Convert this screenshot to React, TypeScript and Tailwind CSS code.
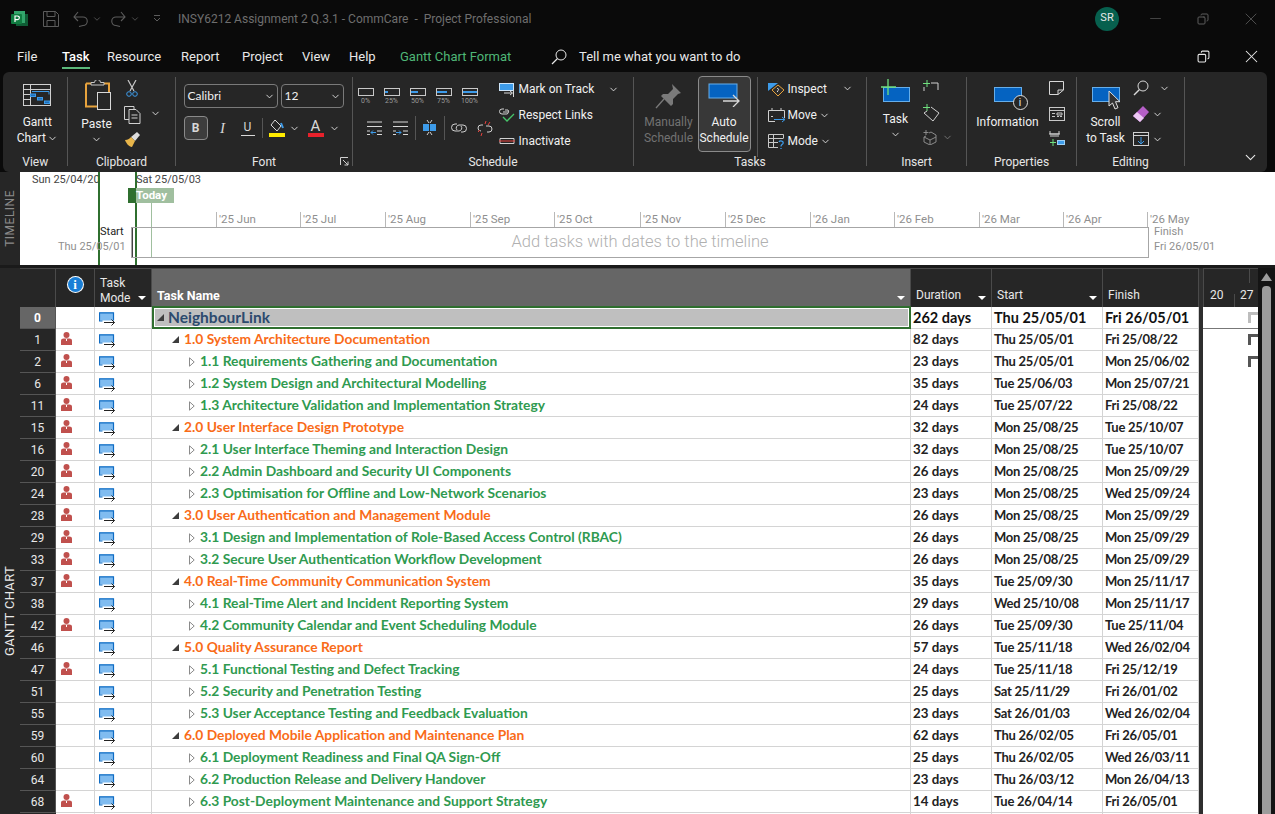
import React from "react";
import { ChevronDown, X, Minus, Copy } from "lucide-react";

const ui = "font-['Roboto',sans-serif]";
const cal = "font-['Lato',sans-serif]";

type Row = { id: number; name: string; dur: string; start: string; finish: string; lvl: 0 | 1 | 2; res: boolean };

const rows: Row[] = [
  { id: 0, name: "NeighbourLink", dur: "262 days", start: "Thu 25/05/01", finish: "Fri 26/05/01", lvl: 0, res: false },
  { id: 1, name: "1.0 System Architecture Documentation", dur: "82 days", start: "Thu 25/05/01", finish: "Fri 25/08/22", lvl: 1, res: true },
  { id: 2, name: "1.1 Requirements Gathering and Documentation", dur: "23 days", start: "Thu 25/05/01", finish: "Mon 25/06/02", lvl: 2, res: true },
  { id: 6, name: "1.2 System Design and Architectural Modelling", dur: "35 days", start: "Tue 25/06/03", finish: "Mon 25/07/21", lvl: 2, res: true },
  { id: 11, name: "1.3 Architecture Validation and Implementation Strategy", dur: "24 days", start: "Tue 25/07/22", finish: "Fri 25/08/22", lvl: 2, res: true },
  { id: 15, name: "2.0 User Interface Design Prototype", dur: "32 days", start: "Mon 25/08/25", finish: "Tue 25/10/07", lvl: 1, res: true },
  { id: 16, name: "2.1 User Interface Theming and Interaction Design", dur: "32 days", start: "Mon 25/08/25", finish: "Tue 25/10/07", lvl: 2, res: true },
  { id: 20, name: "2.2 Admin Dashboard and Security UI Components", dur: "26 days", start: "Mon 25/08/25", finish: "Mon 25/09/29", lvl: 2, res: true },
  { id: 24, name: "2.3 Optimisation for Offline and Low-Network Scenarios", dur: "23 days", start: "Mon 25/08/25", finish: "Wed 25/09/24", lvl: 2, res: true },
  { id: 28, name: "3.0 User Authentication and Management Module", dur: "26 days", start: "Mon 25/08/25", finish: "Mon 25/09/29", lvl: 1, res: true },
  { id: 29, name: "3.1 Design and Implementation of Role-Based Access Control (RBAC)", dur: "26 days", start: "Mon 25/08/25", finish: "Mon 25/09/29", lvl: 2, res: true },
  { id: 33, name: "3.2 Secure User Authentication Workflow Development", dur: "26 days", start: "Mon 25/08/25", finish: "Mon 25/09/29", lvl: 2, res: true },
  { id: 37, name: "4.0 Real-Time Community Communication System", dur: "35 days", start: "Tue 25/09/30", finish: "Mon 25/11/17", lvl: 1, res: true },
  { id: 38, name: "4.1 Real-Time Alert and Incident Reporting System", dur: "29 days", start: "Wed 25/10/08", finish: "Mon 25/11/17", lvl: 2, res: false },
  { id: 42, name: "4.2 Community Calendar and Event Scheduling Module", dur: "26 days", start: "Tue 25/09/30", finish: "Tue 25/11/04", lvl: 2, res: true },
  { id: 46, name: "5.0 Quality Assurance Report", dur: "57 days", start: "Tue 25/11/18", finish: "Wed 26/02/04", lvl: 1, res: false },
  { id: 47, name: "5.1 Functional Testing and Defect Tracking", dur: "24 days", start: "Tue 25/11/18", finish: "Fri 25/12/19", lvl: 2, res: true },
  { id: 51, name: "5.2 Security and Penetration Testing", dur: "25 days", start: "Sat 25/11/29", finish: "Fri 26/01/02", lvl: 2, res: false },
  { id: 55, name: "5.3 User Acceptance Testing and Feedback Evaluation", dur: "23 days", start: "Sat 26/01/03", finish: "Wed 26/02/04", lvl: 2, res: false },
  { id: 59, name: "6.0 Deployed Mobile Application and Maintenance Plan", dur: "62 days", start: "Thu 26/02/05", finish: "Fri 26/05/01", lvl: 1, res: false },
  { id: 60, name: "6.1 Deployment Readiness and Final QA Sign-Off", dur: "25 days", start: "Thu 26/02/05", finish: "Wed 26/03/11", lvl: 2, res: false },
  { id: 64, name: "6.2 Production Release and Delivery Handover", dur: "23 days", start: "Thu 26/03/12", finish: "Mon 26/04/13", lvl: 2, res: false },
  { id: 68, name: "6.3 Post-Deployment Maintenance and Support Strategy", dur: "14 days", start: "Tue 26/04/14", finish: "Fri 26/05/01", lvl: 2, res: true },
];

const months: [string, number][] = [
  ["'25 Jun", 216], ["'25 Jul", 300], ["'25 Aug", 385], ["'25 Sep", 470], ["'25 Oct", 554], ["'25 Nov", 640],
  ["'25 Dec", 725], ["'26 Jan", 810], ["'26 Feb", 894], ["'26 Mar", 979], ["'26 Apr", 1063], ["'26 May", 1147],
];

const Chev = ({ className = "" }: { className?: string }) => (
  <ChevronDown size={11} strokeWidth={2} className={`shrink-0 text-[#e0e0e0] ${className}`} />
);

const Svg = ({ w, h, children, className = "" }: { w: number; h: number; children: React.ReactNode; className?: string }) => (
  <svg width={w} height={h} viewBox={`0 0 ${w} ${h}`} fill="none" className={`shrink-0 ${className}`}>
    {children}
  </svg>
);

const Person = () => (
  <Svg w={11} h={13}>
    <circle cx="5.5" cy="3" r="3" fill="#c0504d" />
    <path d="M0 13V8.500C0 7.200 1.200 6.500 2.500 6.500h6C9.800 6.500 11 7.200 11 8.500V13Z" fill="#c0504d" />
    <path d="M5 7h1v2H5z" fill="#fff" />
  </Svg>
);

const ModeIcon = () => (
  <Svg w={16} h={14}>
    <rect x="0.5" y="0.5" width="14" height="8" fill="#80bcf0" />
    <path d="M0 .8h14.500v7.700M.5 .8V9h3" stroke="#0f6cc4" strokeWidth="1.200" />
    <path d="M5 10.500h10.500M12.500 7.500l3 3-3 3" stroke="#222" />
  </Svg>
);

const TriDown = () => (
  <svg width="7" height="7" viewBox="0 0 7 7" className="shrink-0">
    <path d="M7 0v7H0Z" fill="#3d3d3d" />
  </svg>
);

const TriRight = () => (
  <svg width="6" height="10" viewBox="0 0 6 10" className="shrink-0">
    <path d="M.5.800 5.200 5 .5 9.200Z" fill="#fff" stroke="#8a8a8a" />
  </svg>
);

const ProgressIcon = ({ fill, label }: { fill: number; label: string }) => (
  <div className="flex w-[26px] flex-col items-center">
    <div className="relative h-[8px] w-[16px] border border-[#c8c8c8]">
      {fill > 0 && <div className="absolute left-0 top-[2px] h-[2px] bg-[#3d9be9]" style={{ width: `${fill}%` }} />}
    </div>
    <span className={`${ui} mt-[1px] text-[7px] leading-[8px] text-[#9c9c9c]`}>{label}</span>
  </div>
);

const Group = ({ w, label, children }: { w: number; label?: string; children: React.ReactNode }) => (
  <div className="relative flex h-full shrink-0 flex-col items-center" style={{ width: w }}>
    <div className="h-[82px] w-full">{children}</div>
    {label && <div className="text-[12px] leading-[16px] text-[#e6e6e6]">{label}</div>}
    <div className="absolute bottom-[6px] right-0 top-[5px] w-px bg-[#555]" />
  </div>
);

const ListBtn = ({ icon, label, chev, gap = 5 }: { icon: React.ReactNode; label: string; chev?: boolean; gap?: number }) => (
  <div className="flex h-[26px] items-center text-[12px] text-[#f0f0f0]">
    {icon}
    <span style={{ marginLeft: gap }}>{label}</span>
    {chev && <Chev className="ml-[2px]" />}
  </div>
);

const Ribbon = () => (
  <div className={`${ui} ml-[3px] flex h-[100px] w-[1264px] rounded-[6px] bg-[#262626]`}>
    {/* View */}
    <Group w={64.5} label="View">
      <div className="flex flex-col items-center pl-[4px] pt-[12px] text-[12px] leading-[16px] text-[#f0f0f0]">
        <Svg w={28} h={22}>
          <rect x="0.5" y="0.5" width="27" height="21" stroke="#d0d0d0" />
          <path d="M0 5.500h28M7.500 0v22M0 10.500h7M0 15.500h7" stroke="#d0d0d0" />
          <path d="M9 7.500h17v3M7 11h6" stroke="#3d9be9" />
          <rect x="7.500" y="10" width="5" height="2.500" fill="#1f6fb8" stroke="#3d9be9" />
          <rect x="14.500" y="13.500" width="5" height="2.500" fill="#1f6fb8" stroke="#3d9be9" />
          <rect x="21.500" y="17" width="5" height="2.500" fill="#1f6fb8" stroke="#3d9be9" />
        </Svg>
        <span className="mt-[8px]">Gantt</span>
        <span className="flex items-center">Chart<Chev className="ml-[1px]" /></span>
      </div>
    </Group>
    {/* Clipboard */}
    <Group w={108} label="Clipboard">
      <div className="flex pl-[14px] pt-[8px] text-[12px] text-[#f0f0f0]">
        <div className="flex w-[30px] flex-col items-center">
          <Svg w={28} h={30} className="ml-[3px]">
            <path d="M2 3.500h5M20 3.500h5v23H2v-23" stroke="#e8a33d" strokeWidth="2" />
            <path d="M7 5V2.500h3.500a3 3 0 0 1 6 0H20V5Z" fill="#262626" stroke="#c8c8c8" />
            <rect x="13.500" y="12.500" width="13" height="17" fill="#262626" stroke="#d8d8d8" />
          </Svg>
          <span className="mt-[6px] leading-[16px]">Paste</span>
          <Chev className="mt-[2px]" />
        </div>
        <div className="ml-[12px] flex flex-col items-center">
          <Svg w={12} h={18}>
            <path d="M2 0l6 11M10 0 4 11" stroke="#c8c8c8" strokeWidth="1.200" />
            <circle cx="3" cy="14" r="2.300" stroke="#3d9be9" />
            <circle cx="9" cy="14" r="2.300" stroke="#3d9be9" />
          </Svg>
          <div className="mt-[8px] flex">
            <Svg w={17} h={18}>
              <path d="M5 13.500H.5V.5H10V3" stroke="#d0d0d0" />
              <path d="M5 3.500h7l4 4v10H5Z M7.500 9h6M7.500 12h6" stroke="#d0d0d0" />
            </Svg>
          </div>
          <Svg w={17} h={16} className="mt-[8px]">
            <path d="M7 5l6-5 3 3-5 6Z" fill="#ddd" />
            <path d="M1 8c3 0 5-2 6-3l4 4-3 6C5 15 2 11 1 8Z" fill="#e8b54a" />
          </Svg>
        </div>
        <Chev className="ml-[9px] mt-[28px]" />
      </div>
    </Group>
    {/* Font */}
    <Group w={177} label="Font">
      <div className="pl-[8px] pt-[12px] text-[12px] text-[#f0f0f0]">
        <div className="flex gap-[3px]">
          <div className="flex h-[24px] w-[94px] items-center justify-between rounded-[4px] border border-[#7a7a7a] pl-[3px] pr-[2px]">
            <span className={cal}>Calibri</span><Chev />
          </div>
          <div className="flex h-[24px] w-[63px] items-center justify-between rounded-[4px] border border-[#7a7a7a] pl-[3px] pr-[2px]">
            <span className={cal}>12</span><Chev />
          </div>
        </div>
        <div className="mt-[8px] flex items-center">
          <div className="flex h-[24px] w-[24px] items-center justify-center rounded-[4px] border border-[#8a8a8a] bg-[#3d3d3d] font-bold text-[#d8d8d8]">B</div>
          <span className="ml-[8px] w-[14px] text-center font-['Liberation_Serif'] text-[15px] italic text-[#d8d8d8]">I</span>
          <span className="ml-[11px] w-[14px] border-b border-[#d8d8d8] text-center leading-[15px] text-[#d8d8d8]">U</span>
          <div className="ml-[7px] h-[20px] w-px bg-[#555]" />
          <div className="ml-[6px] flex flex-col items-center">
            <Svg w={16} h={13}>
              <path d="M6 1l6 6-4 5-6-6Z" stroke="#d8d8d8" />
              <path d="M12 4l2 5" stroke="#3d9be9" strokeWidth="2" />
            </Svg>
            <div className="mt-[1px] h-[4px] w-[16px] bg-[#ffeb00]" />
          </div>
          <Chev className="ml-[4px]" />
          <div className="ml-[8px] flex flex-col items-center">
            <span className="text-[15px] leading-[14px] text-[#d8d8d8]">A</span>
            <div className="h-[4px] w-[16px] bg-[#e8212b]" />
          </div>
          <Chev className="ml-[5px]" />
        </div>
      </div>
      <svg width="9" height="9" viewBox="0 0 9 9" className="absolute bottom-[6px] right-[4px]" fill="none">
        <path d="M.5 8V.5H8M3 3l5 5M4.500 8H8V4.500" stroke="#d0d0d0" />
      </svg>
    </Group>
    {/* Schedule */}
    <Group w={281} label="Schedule">
      <div className="flex pt-[4px] text-[12px] text-[#f0f0f0]">
        <div className="flex w-[140px] flex-col">
          <div className="mt-[12px] flex">
            <ProgressIcon fill={0} label="0%" />
            <ProgressIcon fill={25} label="25%" />
            <ProgressIcon fill={50} label="50%" />
            <ProgressIcon fill={75} label="75%" />
            <ProgressIcon fill={100} label="100%" />
          </div>
          <div className="mt-[11px] flex items-center pl-[14px]">
            <Svg w={15} h={14}>
              <path d="M0 1h15M0 5.500h15M0 10h3M10 10h5M0 13.500h3M10 13.500h5" stroke="#d8d8d8" />
              <path d="M9 11.500H4M6 9.500l-2 2 2 2" stroke="#3d9be9" />
            </Svg>
            <Svg w={15} h={14} className="ml-[11px]">
              <path d="M0 1h15M0 5.500h15M0 10h3M10 10h5M0 13.500h3M10 13.500h5" stroke="#d8d8d8" />
              <path d="M3 11.500h5M6 9.500l2 2-2 2" stroke="#3d9be9" />
            </Svg>
            <div className="ml-[7px] h-[24px] w-px bg-[#555]" />
            <Svg w={15} h={16} className="ml-[7px]">
              <rect x="1" y="4" width="13" height="7" fill="#3d9be9" />
              <path d="M5 0l2 3M10 0 8 3M5 15l2-3M10 15l-2-3" stroke="#d0d0d0" />
              <path d="M7.500 3v9" stroke="#262626" />
            </Svg>
            <div className="ml-[7px] h-[24px] w-px bg-[#555]" />
            <Svg w={16} h={12} className="ml-[6px]">
              <path d="M6 2H4a3.500 3.500 0 0 0 0 7h4a3 3 0 0 0 2-5M10 10h2a3.500 3.500 0 0 0 0-7H8a3 3 0 0 0-2 5" stroke="#d0d0d0" />
            </Svg>
            <Svg w={17} h={15} className="ml-[9px]">
              <path d="M7 4H5a3 3 0 0 0 0 6M11 11h2a3 3 0 0 0 0-6h-3" stroke="#d0d0d0" />
              <path d="M10 0 9 3M14 1l-2 3M6 12l-1 3M2 11l2-2" stroke="#e8413c" />
            </Svg>
          </div>
        </div>
        <div className="ml-[6px] w-[109px]">
          <ListBtn
            label="Mark on Track"
            gap={4}
            icon={
              <Svg w={16} h={17}>
                <rect x="0.500" y="2.500" width="14" height="7" fill="#3d9be9" stroke="#cfe6fa" />
                <path d="M5 12h8M11 10l2.500 2-2.500 2M14.500 9v7" stroke="#d8d8d8" />
              </Svg>
            }
          />
          <ListBtn
            label="Respect Links"
            gap={4}
            icon={
              <Svg w={16} h={14}>
                <path d="M5 1H3a2.500 2.500 0 0 0 0 5h5a2.500 2.500 0 0 0 1-4H6M4 4h5" stroke="#d0d0d0" />
                <path d="M4 9l4 4 7-7" stroke="#46c56a" strokeWidth="1.300" />
              </Svg>
            }
          />
          <ListBtn
            label="Inactivate"
            gap={4}
            icon={
              <Svg w={16} h={10}>
                <path d="M1 2.500h14v5H1Z" stroke="#d0d0d0" />
                <path d="M0 5h16" stroke="#e8413c" />
              </Svg>
            }
          />
        </div>
        <Chev className="mt-[8px]" />
      </div>
    </Group>
    {/* Tasks */}
    <Group w={233} label="Tasks">
      <div className="flex text-[12px] leading-[16px] text-[#f0f0f0]">
        <div className="ml-[8px] mt-[10px] flex w-[54px] flex-col items-center text-[#727272]">
          <Svg w={28} h={28}>
            <path d="M17 2l9 9-3 1-5 5 0 5-2 2-10-10 2-2 5 0 5-5Z" fill="#7a7a7a" />
            <path d="M9 17 1 26" stroke="#7a7a7a" strokeWidth="1.300" />
          </Svg>
          <span className="mt-[4px]">Manually</span>
          <span>Schedule</span>
        </div>
        <div className="ml-[2px] mt-[4px] flex h-[76px] w-[53px] flex-col items-center rounded-[4px] border border-[#8a8a8a] bg-[#383838]">
          <Svg w={32} h={24} className="mt-[6px]">
            <rect x="1" y="1" width="28" height="14" fill="#0563c1" stroke="#66aeea" />
            <path d="M15 18h16M25 12l6 6-6 6" stroke="#d8d8d8" strokeWidth="1.300" />
          </Svg>
          <span className="mt-[7px]">Auto</span>
          <span>Schedule</span>
        </div>
        <div className="ml-[6px] mt-[5px] h-[80px] w-px bg-[#555]" />
        <div className="ml-[10px] mt-[4px] text-[12px]">
          <div className="flex">
            <ListBtn
              label="Inspect"
              gap={3}
              icon={
                <Svg w={17} h={15}>
                  <path d="M0 1h10L0 9Z" fill="#3d9be9" />
                  <path d="M10 3l6 5-6 6-6-6Z" fill="#2b2b2b" stroke="#e8a33d" />
                  <path d="M9 6.500c2-.5 2 2 .5 2.500v1" stroke="#ddd" />
                </Svg>
              }
            />
            <Chev className="ml-[15px] mt-[7px]" />
          </div>
          <ListBtn
            label="Move"
            chev
            gap={3}
            icon={
              <Svg w={17} h={16}>
                <path d="M13 3.500h3.500V11M7 14.500H.5v-11H4M4 1v3M13 1v3M4 3.500h9" stroke="#d0d0d0" />
                <path d="M6 12.500h11M14 10l3 2.500-3 2.500" stroke="#3d9be9" />
                <path d="M3 9.500h2" stroke="#d0d0d0" />
              </Svg>
            }
          />
          <ListBtn
            label="Mode"
            chev
            gap={3}
            icon={
              <Svg w={17} h={16}>
                <path d="M.5 1.500h15v4M.5 1.500v13H10M.5 5.500H15M.5 9.500H10M5.500 1.500v13" stroke="#c8c8c8" />
                <path d="M11 9c1-2 5-1 4 1.500-.5 1-2 1-2 3M13 15v1" stroke="#3d9be9" strokeWidth="1.300" />
              </Svg>
            }
          />
        </div>
      </div>
    </Group>
    {/* Insert */}
    <Group w={100} label="Insert">
      <div className="flex text-[12px] leading-[16px] text-[#f0f0f0]">
        <div className="ml-[15px] mt-[7px] flex w-[28px] flex-col items-center">
          <Svg w={30} h={24}>
            <rect x="2.500" y="8.500" width="26" height="14" fill="#0563c1" stroke="#66aeea" />
            <path d="M7 0v16M0 8h15" stroke="#6fe07f" strokeWidth="1.300" />
          </Svg>
          <span className="mt-[8px]">Task</span>
          <Chev className="mt-[2px]" />
        </div>
        <div className="ml-[13px] flex flex-col items-start">
          <Svg w={16} h={12} className="mt-[8px]">
            <path d="M4 0v7M0 3.500h7" stroke="#6fe07f" />
            <path d="M1 7v4M8 3h7v7" stroke="#d0d0d0" />
          </Svg>
          <Svg w={17} h={18} className="mt-[12px]">
            <path d="M4 0v7M0 3.500h7" stroke="#6fe07f" />
            <path d="M8 3l8 6-6 8-9-8 3-2" stroke="#d0d0d0" />
          </Svg>
          <div className="mt-[8px] flex items-center">
            <Svg w={14} h={15}>
              <path d="M3 6 1 7v5l6 3 6-3V5L8 2 6 3M1 7l6 3 6-3M7 10v5" stroke="#8a8a8a" />
              <path d="M3 0v5M0.500 2.500h5" stroke="#8a8a8a" />
            </Svg>
            <ChevronDown size={11} className="ml-[5px] text-[#777]" />
          </div>
        </div>
      </div>
    </Group>
    {/* Properties */}
    <Group w={110} label="Properties">
      <div className="flex text-[12px] leading-[16px] text-[#f0f0f0]">
        <div className="ml-[5px] mt-[15px] flex w-[72px] flex-col items-center">
          <div className="relative h-[15px] w-[28px] border border-[#66aeea] bg-[#0563c1]">
            <div className="absolute right-[-7px] top-[7px] flex h-[15px] w-[15px] items-center justify-center rounded-full border border-[#ddd] bg-[#262626] text-[10px] leading-none">i</div>
          </div>
          <span className="mt-[12px] whitespace-nowrap">Information</span>
        </div>
        <div className="ml-[5px] flex flex-col items-start">
          <Svg w={15} h={14} className="mt-[9px]">
            <path d="M.5.500h14V9L9 13.500H.5ZM9 13.500V9h5.500" stroke="#d8d8d8" />
          </Svg>
          <Svg w={16} h={14} className="mt-[12px]">
            <rect x="0.500" y="0.500" width="15" height="13" stroke="#c8c8c8" />
            <path d="M0 3.500h16M3 6.500h3M3 9.500h3M8 6h5v2H8ZM8 9.500h2M11 9.500h2" stroke="#c8c8c8" />
          </Svg>
          <Svg w={16} h={16} className="mt-[10px]">
            <path d="M1 0v3h9V0M0 3h11M1 5h9" stroke="#d0d0d0" />
            <path d="M4 8v7M1 11.500h6" stroke="#6fe07f" />
            <rect x="8.500" y="9.500" width="7" height="4" fill="#3d9be9" stroke="#9fd0f5" />
          </Svg>
        </div>
      </div>
    </Group>
    {/* Editing */}
    <Group w={108} label="Editing">
      <div className="flex text-[12px] leading-[16px] text-[#f0f0f0]">
        <div className="ml-[10px] mt-[15px] flex w-[38px] flex-col items-center">
          <div className="relative h-[15px] w-[28px] border border-[#66aeea] bg-[#0563c1]">
            <svg width="14" height="21" viewBox="0 0 14 21" className="absolute left-[15px] top-[2px]">
              <path d="M1 1v15l3.500-3 2.500 6 3-1.300-2.500-6H12Z" fill="#333" stroke="#ddd" />
            </svg>
          </div>
          <span className="mt-[12px]">Scroll</span>
          <span className="whitespace-nowrap">to Task</span>
        </div>
        <div className="ml-[8px] flex flex-col items-start">
          <div className="mt-[8px] flex items-center">
            <Svg w={16} h={16}>
              <circle cx="10" cy="6" r="5" stroke="#d8d8d8" />
              <path d="M6.500 9.500 1 15" stroke="#d8d8d8" strokeWidth="1.500" />
            </Svg>
            <Chev className="ml-[10px]" />
          </div>
          <div className="mt-[10px] flex items-center">
            <Svg w={16} h={16}>
              <path d="M10 0l6 6-9 10-7-6Z" fill="#b55fc7" />
              <path d="M4 6l7 6-4 4-7-6Z" fill="#eec9f5" />
            </Svg>
            <Chev className="ml-[3px]" />
          </div>
          <div className="mt-[10px] flex items-center">
            <Svg w={16} h={14}>
              <rect x="0.500" y="0.500" width="15" height="13" stroke="#d0d0d0" />
              <path d="M0 3.500h16" stroke="#d0d0d0" />
              <path d="M8 5v7M5 9l3 3 3-3" stroke="#3d9be9" />
            </Svg>
            <Chev className="ml-[3px]" />
          </div>
        </div>
      </div>
    </Group>
    {/* collapse */}
    <div className="flex flex-1 items-end justify-end pb-[6px] pr-[8px]">
      <ChevronDown size={17} strokeWidth={1.600} className="text-[#e8e8e8]" />
    </div>
  </div>
);

const TitleBar = () => (
  <div className={`${ui} flex h-[37px] items-center bg-[#0a0a0a] text-[12px] text-[#6e6e6e]`}>
    <Svg w={17} h={16} className="ml-[11px]">
      <path d="M5 3h12v12H5Z" fill="#0f5c35" />
      <path d="M3 0h11v12H3Z" fill="#33a56c" />
      <rect x="0" y="3" width="11" height="10" rx="1" fill="#107c41" />
      <path d="M4 11V5h2.500a1.800 1.800 0 0 1 0 3.700H4" stroke="#fff" strokeWidth="1.200" />
    </Svg>
    <Svg w={16} h={16} className="ml-[15px]">
      <path d="M.5.500h12l3 3v12H.5ZM4 .500v5h8v-5M4 15.500v-6h8v6" stroke="#5c5c5c" />
    </Svg>
    <Svg w={15} h={16} className="ml-[14px]">
      <path d="M1 6h9a4.200 4.200 0 0 1 0 8.500L6 15.500M5 1 1 6l4 4" stroke="#5c5c5c" strokeWidth="1.100" />
    </Svg>
    <ChevronDown size={10} className="ml-[4px] text-[#5c5c5c]" />
    <Svg w={15} h={16} className="ml-[9px]">
      <path d="M14 6H5a4.200 4.200 0 0 0 0 8.500l4 1M10 1l4 5-4 4" stroke="#5c5c5c" strokeWidth="1.100" />
    </Svg>
    <ChevronDown size={10} className="ml-[4px] text-[#5c5c5c]" />
    <Svg w={8} h={8} className="ml-[13px]">
      <path d="M1 .500h6M1 3l3 3 3-3" stroke="#5c5c5c" />
    </Svg>
    <span className="ml-[17px] whitespace-nowrap text-[12px]">INSY6212 Assignment 2 Q.3.1 - CommCare&nbsp; - &nbsp;Project Professional</span>
    <div className="ml-auto flex items-center">
      <div className="mr-[12px] flex h-[24px] w-[24px] items-center justify-center rounded-full bg-[#07604e] text-[11px] text-[#e8e8e8]">SR</div>
      <div className="flex w-[48px] justify-center"><Minus size={17} strokeWidth={1} className="text-[#5c5c5c]" /></div>
      <div className="flex w-[48px] justify-center"><Copy size={12} className="-scale-x-100 text-[#5c5c5c]" /></div>
      <div className="flex w-[48px] justify-center"><X size={20} strokeWidth={1} className="text-[#5c5c5c]" /></div>
    </div>
  </div>
);

const TabBar = () => (
  <div className={`${ui} flex h-[35px] items-start bg-[#0a0a0a] pl-[17px] pt-[11px] text-[13px] leading-[18px] text-[#e8e8e8]`}>
    <span className="w-[45px]">File</span>
    <span className="w-[45px]">
      <span className="inline-block h-[21px] border-b-2 border-[#5cb87a] font-medium text-white">Task</span>
    </span>
    <span className="w-[74px]">Resource</span>
    <span className="w-[61px]">Report</span>
    <span className="w-[60px]">Project</span>
    <span className="w-[47px]">View</span>
    <span className="w-[51px]">Help</span>
    <span className="w-[151px] text-[#4fb777]">Gantt Chart Format</span>
    <Svg w={16} h={16} className="mr-[12px] mt-[1px]">
      <circle cx="10" cy="6" r="5" stroke="#e8e8e8" />
      <path d="M6.500 9.500 1 15" stroke="#e8e8e8" strokeWidth="1.300" />
    </Svg>
    <span>Tell me what you want to do</span>
    <div className="-mt-[2px] ml-auto flex items-center">
      <div className="flex w-[48px] justify-center"><Copy size={13} className="-scale-x-100 text-[#e8e8e8]" /></div>
      <div className="flex w-[48px] justify-center"><X size={21} strokeWidth={1.200} className="text-[#e8e8e8]" /></div>
    </div>
  </div>
);

const Timeline = () => (
  <div className={`${ui} flex h-[93px]`}>
    <div className="flex w-[20px] shrink-0 items-center justify-center bg-[#262626]">
      <span className="rotate-180 whitespace-nowrap text-[12px] tracking-[0.5px] text-[#8a8a8a] [writing-mode:vertical-rl]">TIMELINE</span>
    </div>
    <div className="relative flex-1 overflow-hidden bg-white text-[11px] text-[#444]">
      <span className="absolute left-[12px] top-0 whitespace-nowrap leading-[16px]">Sun 25/04/20</span>
      <span className="absolute left-[116px] top-0 whitespace-nowrap leading-[16px]">Sat 25/05/03</span>
      <div className="absolute bottom-0 left-[78px] top-0 w-[2px] bg-[#2f6f2f]" />
      <div className="absolute bottom-0 left-[115px] top-0 w-[2px] bg-[#2f6f2f]" />
      <div className="absolute left-[108px] top-[16px] flex h-[15px] w-[46px] bg-[#a0bf9f]">
        <div className="h-full w-[8px] bg-[#2f6f2f]" />
        <span className="text-[11.500px] font-bold leading-[15px] text-white">Today</span>
      </div>
      <div className="absolute left-[131px] top-[31px] h-[55px] w-px bg-[#a0bf9f]" />
      <span className="absolute left-[80px] top-[52px] leading-[16px] text-[#222]">Start</span>
      <span className="absolute left-[38px] top-[67px] whitespace-nowrap leading-[16px] text-[#8f8f8f]">Thu 25/05/01</span>
      <div className="absolute left-[111px] top-[55px] h-[31px] w-[1018px] border border-[#a6a6a6]">
        <div className="absolute inset-y-0 left-0 w-[4px] border-l border-l-[#444]" />
      </div>
      <span className="absolute left-[111px] top-[55px] flex h-[31px] w-[1018px] items-center justify-center text-[16.500px] font-light text-[#b0b0b0]">Add tasks with dates to the timeline</span>
      {months.map(([m, x]) => (
        <div key={m} className="absolute top-[40px] h-[15px] whitespace-nowrap border-l border-[#b8b8b8] pl-[2px] text-[11.500px] leading-[14px] text-[#8f8f8f]" style={{ left: x - 20 }}>
          {m}
        </div>
      ))}
      <span className="absolute left-[1134px] top-[52px] leading-[16px] text-[#8f8f8f]">Finish</span>
      <span className="absolute left-[1134px] top-[67px] whitespace-nowrap leading-[16px] text-[#8f8f8f]">Fri 26/05/01</span>
    </div>
  </div>
);

const Cell = ({ w, className = "", children }: { w: number; className?: string; children?: React.ReactNode }) => (
  <div className={`flex h-full shrink-0 items-center overflow-hidden whitespace-nowrap border-b border-r border-[#d4d4d4] bg-white ${className}`} style={{ width: w }}>
    {children}
  </div>
);

const SortArrow = () => (
  <svg width="8" height="4" viewBox="0 0 8 4" className="absolute bottom-[7px] right-[5px]">
    <path d="M0 0h8L4 4Z" fill="#fff" />
  </svg>
);

const TableHeader = () => (
  <div className={`${ui} flex h-[39px] bg-[#262626] text-[12px] leading-[15px] text-[#e8e8e8]`}>
    <div className="w-[36px] shrink-0 border-r border-t border-[#4a4a4a]" />
    <div className="flex w-[39px] shrink-0 items-center justify-center border-r border-t border-[#4a4a4a] pb-[8px]">
      <div className="flex h-[15px] w-[15px] items-center justify-center rounded-full bg-[#1a7fd6] ring-1 ring-white">
        <span className="font-['Liberation_Serif'] text-[13px] font-bold leading-none text-white">i</span>
      </div>
    </div>
    <div className="relative w-[57px] shrink-0 border-r border-t border-[#4a4a4a] pl-[5px] pt-[7px]">
      Task<br />Mode
      <SortArrow />
    </div>
    <div className="relative flex w-[759px] shrink-0 items-end border-r border-t border-[#4a4a4a] bg-[#666] pb-[4px] pl-[5px] text-[12.500px] font-bold text-white">
      Task Name
      <SortArrow />
    </div>
    <div className="relative flex w-[81px] shrink-0 items-end border-r border-t border-[#4a4a4a] pb-[4px] pl-[5px]">
      Duration
      <SortArrow />
    </div>
    <div className="relative flex w-[111px] shrink-0 items-end border-r border-t border-[#4a4a4a] pb-[4px] pl-[5px]">
      Start
      <SortArrow />
    </div>
    <div className="flex w-[96px] shrink-0 items-end border-r border-t border-[#4a4a4a] pb-[4px] pl-[5px]">
      Finish
    </div>
    <div className="w-[4px] shrink-0 bg-[#2e2e2e]" />
    <div className="relative flex-1 border-l border-t border-[#4a4a4a]">
      <div className="absolute left-[45px] top-0 h-[14px] border-l border-[#4a4a4a]" />
      <div className="absolute bottom-0 left-[30px] h-[13px] border-l border-[#4a4a4a]" />
      <span className="absolute bottom-[4px] left-[6px]">20</span>
      <span className="absolute bottom-[4px] left-[36px]">27</span>
    </div>
  </div>
);

const TableRow = ({ r }: { r: Row }) => {
  const top = r.lvl === 0;
  const dates = top ? "text-[14.500px] font-bold text-[#111]" : "text-[13px] font-bold tracking-[-0.25px] text-[#222]";
  const dur = top ? "text-[14.500px] font-bold text-[#111]" : "text-[13.300px] font-bold text-[#222]";
  return (
    <div className="flex h-[22px]">
      <div className={`${ui} flex h-full w-[36px] shrink-0 items-center justify-center border-b border-r border-[#555] text-[12px] text-[#e8e8e8] ${top ? "bg-[#666] font-bold text-white" : "bg-[#262626]"}`}>
        {r.id}
      </div>
      <Cell w={39} className="items-start pl-[5px] pt-[3px]">{r.res && <Person />}</Cell>
      <Cell w={57} className="pl-[4px] pt-[2px]"><ModeIcon /></Cell>
      {top ? (
        <div className="relative h-full w-[759px] shrink-0 bg-white">
          {/* selected cell frame sits over the header edge */}
          <div className="absolute -top-px bottom-0 left-0 right-0 flex items-center whitespace-nowrap border-2 border-[#2f6f2f] bg-[#bfbfbf] pl-[3px] ring-1 ring-inset ring-white">
            <TriDown />
            <span className={`${cal} ml-[4px] text-[15.500px] font-bold text-[#2c4a6e]`}>{r.name}</span>
          </div>
        </div>
      ) : (
        <Cell w={759} className={r.lvl === 1 ? "pl-[20px]" : "pl-[37px]"}>
          {r.lvl === 1 ? <TriDown /> : <TriRight />}
          <span className={`${cal} ml-[5px] text-[13.800px] font-bold ${r.lvl === 1 ? "text-[#f96b18]" : "text-[#2f9a50]"}`}>{r.name}</span>
        </Cell>
      )}
      <Cell w={81} className={`${cal} pl-[2px] ${dur}`}>{r.dur}</Cell>
      <Cell w={111} className={`${cal} pl-[2px] ${dates}`}>{r.start}</Cell>
      <Cell w={96} className={`${cal} pl-[2px] ${dates}`}>{r.finish}</Cell>
      <div className="w-[4px] shrink-0 bg-[#2e2e2e]" />
      <div className={`relative flex-1 bg-white ${top ? "border-b border-[#777]" : ""}`}>
        {r.id <= 2 && (
          <div className={`absolute left-[45px] top-[5px] h-[11px] w-[10px] border-l-[3px] border-t-[3px] ${top ? "border-[#bdbdbd]" : "border-[#555]"}`} />
        )}
      </div>
    </div>
  );
};

const Scrollbar = () => (
  <div className="flex w-[17px] shrink-0 flex-col items-center bg-[#141414] pt-[5px]">
    <svg width="11" height="8" viewBox="0 0 11 8">
      <path d="M5.500 0 11 8H0Z" fill="#9c9c9c" />
    </svg>
    <div className="mt-[5px] w-[9px] flex-1 rounded-t-[4px] bg-[#9c9c9c]" />
  </div>
);

export default function App() {
  return (
    <div className="h-[814px] w-[1275px] overflow-hidden bg-[#0a0a0a]">
      <TitleBar />
      <TabBar />
      <Ribbon />
      <Timeline />
      <div className="h-[3px] bg-[#1a1a1a]" />
      <div className="flex h-[546px] overflow-hidden">
        <div className="flex w-[20px] shrink-0 items-end justify-center bg-[#262626]">
          <span className={`${ui} mb-[158px] rotate-180 whitespace-nowrap text-[13px] tracking-[0.3px] text-[#e8e8e8] [writing-mode:vertical-rl]`}>
            GANTT CHART
          </span>
        </div>
        <div className="min-w-0 flex-1">
          <TableHeader />
          {rows.map((r) => (
            <TableRow key={r.id} r={r} />
          ))}
          <div className="flex h-[22px]">
            <div className="w-[36px] bg-[#262626]" />
            <div className="w-[39px] border-r border-[#d4d4d4] bg-white" />
            <div className="w-[57px] border-r border-[#d4d4d4] bg-white" />
            <div className="w-[759px] border-r border-[#d4d4d4] bg-white" />
            <div className="w-[81px] border-r border-[#d4d4d4] bg-white" />
            <div className="w-[111px] border-r border-[#d4d4d4] bg-white" />
            <div className="w-[96px] border-r border-[#d4d4d4] bg-white" />
            <div className="w-[4px] bg-[#2e2e2e]" />
            <div className="flex-1 bg-white" />
          </div>
        </div>
        <Scrollbar />
      </div>
    </div>
  );
}
